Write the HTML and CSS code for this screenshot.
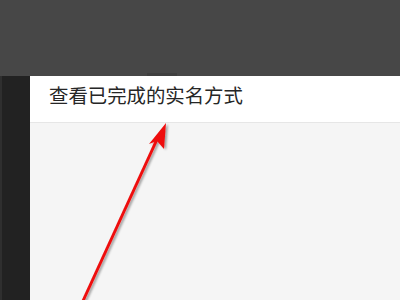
FILE: index.html
```html
<!DOCTYPE html>
<html lang="zh">
<head>
<meta charset="utf-8">
<link rel="stylesheet" href="styles.css">
</head>
<body>
<div class="top"><div class="notch"></div></div>
<div class="main">
  <div class="side"></div>
  <div class="panel">
    <div class="header">查看已完成的实名方式</div>
    <div class="content"></div>
  </div>
</div>
<svg class="arrow" width="400" height="300" viewBox="0 0 400 300">
  <defs>
    <filter id="sh" x="-20%" y="-20%" width="140%" height="140%">
      <feDropShadow dx="2" dy="1" stdDeviation="1.2" flood-color="#000" flood-opacity="0.35"/>
    </filter>
  </defs>
  <g filter="url(#sh)">
    <line x1="82.5" y1="302" x2="159" y2="135" stroke="#ee1111" stroke-width="3"/>
    <polygon points="166,123 149,144 157,141 164,149" fill="#ee1111"/>
  </g>
</svg>
</body>
</html>
```
FILE: styles.css
```css
html, body {
  margin: 0;
  padding: 0;
}
body {
  width: 400px;
  height: 300px;
  overflow: hidden;
  background: #474747;
  position: relative;
  font-family: "Noto Sans CJK SC", "Liberation Sans", sans-serif;
}
.top {
  height: 76px;
  display: flex;
  flex-direction: column;
  justify-content: flex-end;
  background: #474747;
}
.notch {
  margin-left: 147px;
  width: 30px;
  height: 3px;
  background: #3f3f3f;
}
.main {
  display: flex;
  height: 224px;
}
.side {
  width: 28px;
  border-left: 2px solid #2f2f2f;
  background: #222222;
}
.panel {
  flex: 1;
  display: flex;
  flex-direction: column;
  background: #f5f5f5;
}
.header {
  height: 47px;
  box-sizing: border-box;
  border-bottom: 1px solid #e6e6e6;
  background: #ffffff;
  padding-left: 19px;
  padding-top: 6px;
  font-size: 19.4px;
  line-height: 26px;
  color: #262626;
}
.content {
  flex: 1;
}
.arrow {
  position: absolute;
  left: 0;
  top: 0;
}
```
